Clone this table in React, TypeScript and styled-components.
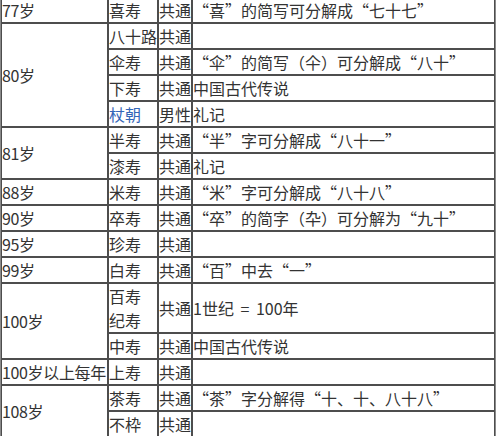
import React from "react";
import styled, { createGlobalStyle } from "styled-components";

const GlobalStyle = createGlobalStyle`
  html, body {
    margin: 0;
    padding: 0;
    background: #ffffff;
    overflow: hidden;
  }
  body {
    font-family: "Noto Sans CJK SC", "Noto Sans", sans-serif;
  }
`;

const Page = styled.div`
  width: 496px;
  height: 436px;
  overflow: hidden;
`;

const Table = styled.table`
  width: 496px;
  margin-top: -4px;
  table-layout: fixed;
  border-collapse: separate;
  border-spacing: 0;
  border: 1px solid #8a8a8a;
  font-family: "Noto Sans CJK SC", "Noto Sans", sans-serif;
  font-size: 16px;
  line-height: 24px;
  color: #333333;
`;

const Col = styled.col<{ $w?: number }>`
  width: ${(p) => (p.$w ? `${p.$w}px` : "auto")};
`;

const Cell = styled.td<{ $tight?: boolean; $note?: boolean }>`
  border: 1px solid #4d4d4d;
  padding: 0;
  vertical-align: middle;
  white-space: nowrap;
  overflow: visible;
  text-align: left;
  letter-spacing: ${(p) => (p.$tight ? "-0.35px" : "0")};
  word-spacing: ${(p) => (p.$note ? "3px" : "0")};
`;

const Link = styled.span`
  color: #3366b8;
`;

type Sub = { name: React.ReactNode; who: string; note: string };
type Group = { age: string; subs: Sub[] };

const data: Group[] = [
  { age: "77岁", subs: [{ name: "喜寿", who: "共通", note: "“喜”的简写可分解成“七十七”" }] },
  {
    age: "80岁",
    subs: [
      { name: "八十路", who: "共通", note: "" },
      { name: "伞寿", who: "共通", note: "“伞”的简写（仐）可分解成“八十”" },
      { name: "下寿", who: "共通", note: "中国古代传说" },
      { name: <Link>杖朝</Link>, who: "男性", note: "礼记" },
    ],
  },
  {
    age: "81岁",
    subs: [
      { name: "半寿", who: "共通", note: "“半”字可分解成“八十一”" },
      { name: "漆寿", who: "共通", note: "礼记" },
    ],
  },
  { age: "88岁", subs: [{ name: "米寿", who: "共通", note: "“米”字可分解成“八十八”" }] },
  { age: "90岁", subs: [{ name: "卒寿", who: "共通", note: "“卒”的简字（卆）可分解为“九十”" }] },
  { age: "95岁", subs: [{ name: "珍寿", who: "共通", note: "" }] },
  { age: "99岁", subs: [{ name: "白寿", who: "共通", note: "“百”中去“一”" }] },
  {
    age: "100岁",
    subs: [
      {
        name: (
          <>
            百寿
            <br />
            纪寿
          </>
        ),
        who: "共通",
        note: "1世纪 = 100年",
      },
      { name: "中寿", who: "共通", note: "中国古代传说" },
    ],
  },
  { age: "100岁以上每年", subs: [{ name: "上寿", who: "共通", note: "" }] },
  {
    age: "108岁",
    subs: [
      { name: "茶寿", who: "共通", note: "“茶”字分解得“十、十、八十八”" },
      { name: "不枠", who: "共通", note: "" },
    ],
  },
];

export default function App() {
  return (
    <Page>
      <GlobalStyle />
      <Table lang="zh-CN">
        <colgroup>
          <Col $w={107} />
          <Col $w={50} />
          <Col $w={34} />
          <Col />
        </colgroup>
        <tbody>
          {data.map((g) =>
            g.subs.map((s, i) => (
              <tr key={`${g.age}-${i}`}>
                {i === 0 && (
                  <Cell rowSpan={g.subs.length} $tight>
                    {g.age}
                  </Cell>
                )}
                <Cell>{s.name}</Cell>
                <Cell>{s.who}</Cell>
                <Cell $note>{s.note}</Cell>
              </tr>
            ))
          )}
        </tbody>
      </Table>
    </Page>
  );
}
